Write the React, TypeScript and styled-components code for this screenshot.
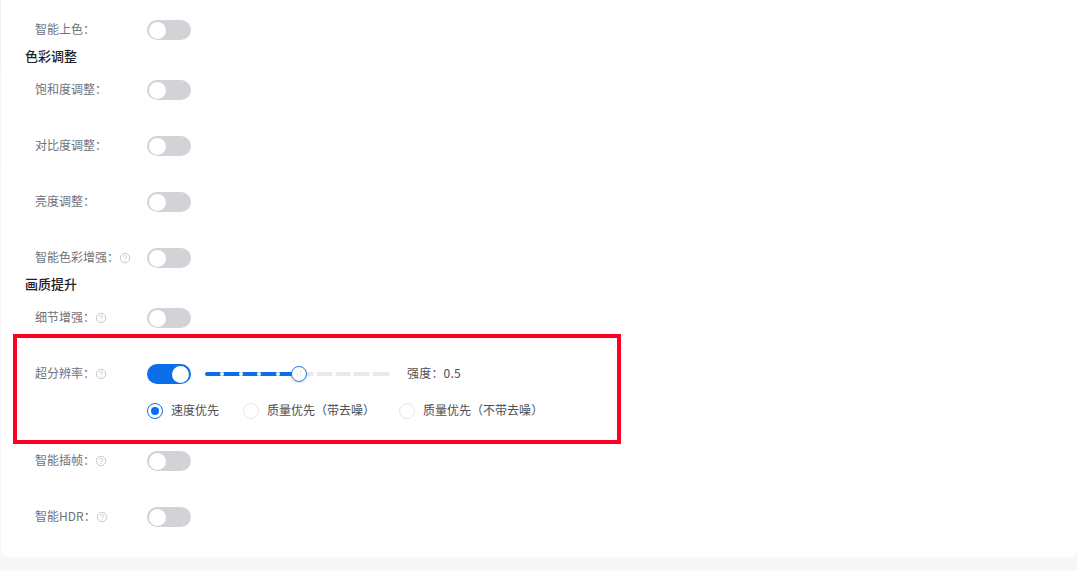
import styled, { createGlobalStyle } from 'styled-components'

const GlobalStyle = createGlobalStyle`
  html, body {
    margin: 0;
    background: #fff;
  }
  body {
    font-family: "Noto Sans CJK SC", "Liberation Sans", sans-serif;
  }
`

const COLON = '\uFF1A'

function HelpIcon() {
  return (
    <HelpSvg viewBox="0 0 12 12" width="12" height="12">
      <circle cx="6" cy="6" r="4.7" fill="none" stroke="#b9bbc0" strokeWidth="0.8" />
      <path
        d="M4.4 4.9c0-.9.7-1.4 1.6-1.4s1.6.6 1.6 1.3c0 1.1-1.6 1.1-1.6 2.3"
        fill="none"
        stroke="#b9bbc0"
        strokeWidth="0.8"
      />
      <circle cx="6" cy="8.5" r="0.5" fill="#b9bbc0" />
    </HelpSvg>
  )
}

type SettingProps = {
  label: string
  help?: boolean
  gap?: number
}

function Setting({ label, help, gap }: SettingProps) {
  return (
    <Row $gap={gap}>
      <Label>
        {label}
        {COLON}
        {help && <HelpIcon />}
      </Label>
      <Toggle />
    </Row>
  )
}

const TICKS = [0, 1, 2, 3, 5, 6, 7, 8]

export default function App() {
  return (
    <Page>
      <GlobalStyle />
      <Card>
        <Setting label="智能上色" gap={7} />
        <SectionTitle $gap={13}>色彩调整</SectionTitle>
        <Setting label="饱和度调整" gap={36} />
        <Setting label="对比度调整" gap={36} />
        <Setting label="亮度调整" gap={36} />
        <Setting label="智能色彩增强" help gap={7} />
        <SectionTitle $gap={13}>画质提升</SectionTitle>
        <Setting label="细节增强" help gap={6} />
        <Highlight>
          <Row $gap={19}>
            <Label>
              超分辨率{COLON}
              <HelpIcon />
            </Label>
            <Toggle $on />
            <Slider>
              {TICKS.map((n) => (
                <Tick key={n} $at={n} />
              ))}
              <Handle>
                <Grip />
                <Grip />
              </Handle>
            </Slider>
            <Strength>强度{COLON}0.5</Strength>
          </Row>
          <RadioGroup>
            <RadioItem>
              <Radio $checked />
              <RadioText>速度优先</RadioText>
            </RadioItem>
            <RadioItem>
              <Radio />
              <RadioText>质量优先{'\uFF08'}带去噪{'\uFF09'}</RadioText>
            </RadioItem>
            <RadioItem>
              <Radio />
              <RadioText>质量优先{'\uFF08'}不带去噪{'\uFF09'}</RadioText>
            </RadioItem>
          </RadioGroup>
        </Highlight>
        <Setting label="智能插帧" help gap={36} />
        <Setting label="智能HDR" help />
      </Card>
    </Page>
  )
}

const Page = styled.div`
  height: 571px;
  background: linear-gradient(#f3f4f7, #f6f7f9);
  padding-left: 1px;
  overflow: hidden;
`

const Card = styled.div`
  height: 557px;
  box-sizing: border-box;
  padding-top: 20px;
  background: #fff;
  border-radius: 0 0 8px 8px;
`

const Row = styled.div<{ $gap?: number }>`
  display: flex;
  align-items: center;
  height: 20px;
  padding-left: 34px;
  margin-bottom: ${({ $gap }) => $gap || 0}px;
`

const Label = styled.div`
  display: flex;
  align-items: center;
  width: 112px;
  height: 20px;
  box-sizing: border-box;
  padding-bottom: 2px;
  flex: none;
  font-size: 12px;
  line-height: 18px;
  color: #6f7278;
`

const HelpSvg = styled.svg`
  flex: none;
  margin-top: 2px;
`

const SectionTitle = styled.div<{ $gap?: number }>`
  height: 20px;
  padding-left: 24px;
  margin-bottom: ${({ $gap }) => $gap || 0}px;
  font-size: 13px;
  font-weight: 500;
  line-height: 18px;
  color: #1f2126;
`

const Toggle = styled.div<{ $on?: boolean }>`
  position: relative;
  flex: none;
  width: 44px;
  height: 20px;
  border-radius: 10px;
  background: ${({ $on }) => ($on ? '#0a6fe8' : '#d2d3d7')};

  &::after {
    content: '';
    position: absolute;
    top: 1.5px;
    left: ${({ $on }) => ($on ? '25px' : '2px')};
    width: 17px;
    height: 17px;
    border-radius: 50%;
    background: #fff;
  }
`

const Highlight = styled.div`
  width: 608px;
  height: 110px;
  box-sizing: border-box;
  margin: 0 0 7px 12px;
  padding-top: 26px;
  border: 4px solid #ff0022;

  ${Row} {
    padding-left: 18px;
  }
`

const Slider = styled.div`
  position: relative;
  flex: none;
  width: 185px;
  height: 4px;
  margin-left: 14px;
  border-radius: 2px;
  background: linear-gradient(to right, #0a6fe8 50%, #e8e9eb 50%);
`

const Tick = styled.span<{ $at: number }>`
  position: absolute;
  top: 0;
  left: ${({ $at }) => 15 + $at * 18.6}px;
  width: 4px;
  height: 4px;
  border-radius: 50%;
  background: #fff;
`

const Handle = styled.div`
  position: absolute;
  top: -6px;
  left: 86px;
  display: flex;
  align-items: center;
  justify-content: center;
  gap: 2px;
  width: 16px;
  height: 16px;
  box-sizing: border-box;
  border: 1.5px solid #1f7fee;
  border-radius: 50%;
  background: #fff;
  box-shadow: 0 1px 3px rgba(0, 0, 0, 0.12);
`

const Grip = styled.span`
  width: 1px;
  height: 6px;
  background: #e4e6ea;
`

const Strength = styled.div`
  margin-left: 17px;
  padding-bottom: 2px;
  font-size: 12px;
  line-height: 18px;
  letter-spacing: 0.2px;
  color: #4b4e55;
`

const RadioGroup = styled.div`
  display: flex;
  gap: 24px;
  margin-left: 130px;
`

const RadioItem = styled.label`
  display: flex;
  align-items: center;
  gap: 8px;
  height: 16px;
`

const RadioText = styled.span`
  margin-bottom: 2px;
  font-size: 12px;
  line-height: 14px;
  color: #4b4e55;
`

const Radio = styled.span<{ $checked?: boolean }>`
  position: relative;
  flex: none;
  width: 16px;
  height: 16px;
  box-sizing: border-box;
  border: 1px solid ${({ $checked }) => ($checked ? '#0a6fe8' : '#e6e7ea')};
  border-radius: 50%;
  background: #fff;

  &::after {
    content: '';
    display: ${({ $checked }) => ($checked ? 'block' : 'none')};
    position: absolute;
    top: 3px;
    left: 3px;
    width: 8px;
    height: 8px;
    border-radius: 50%;
    background: #0a6fe8;
  }
`
